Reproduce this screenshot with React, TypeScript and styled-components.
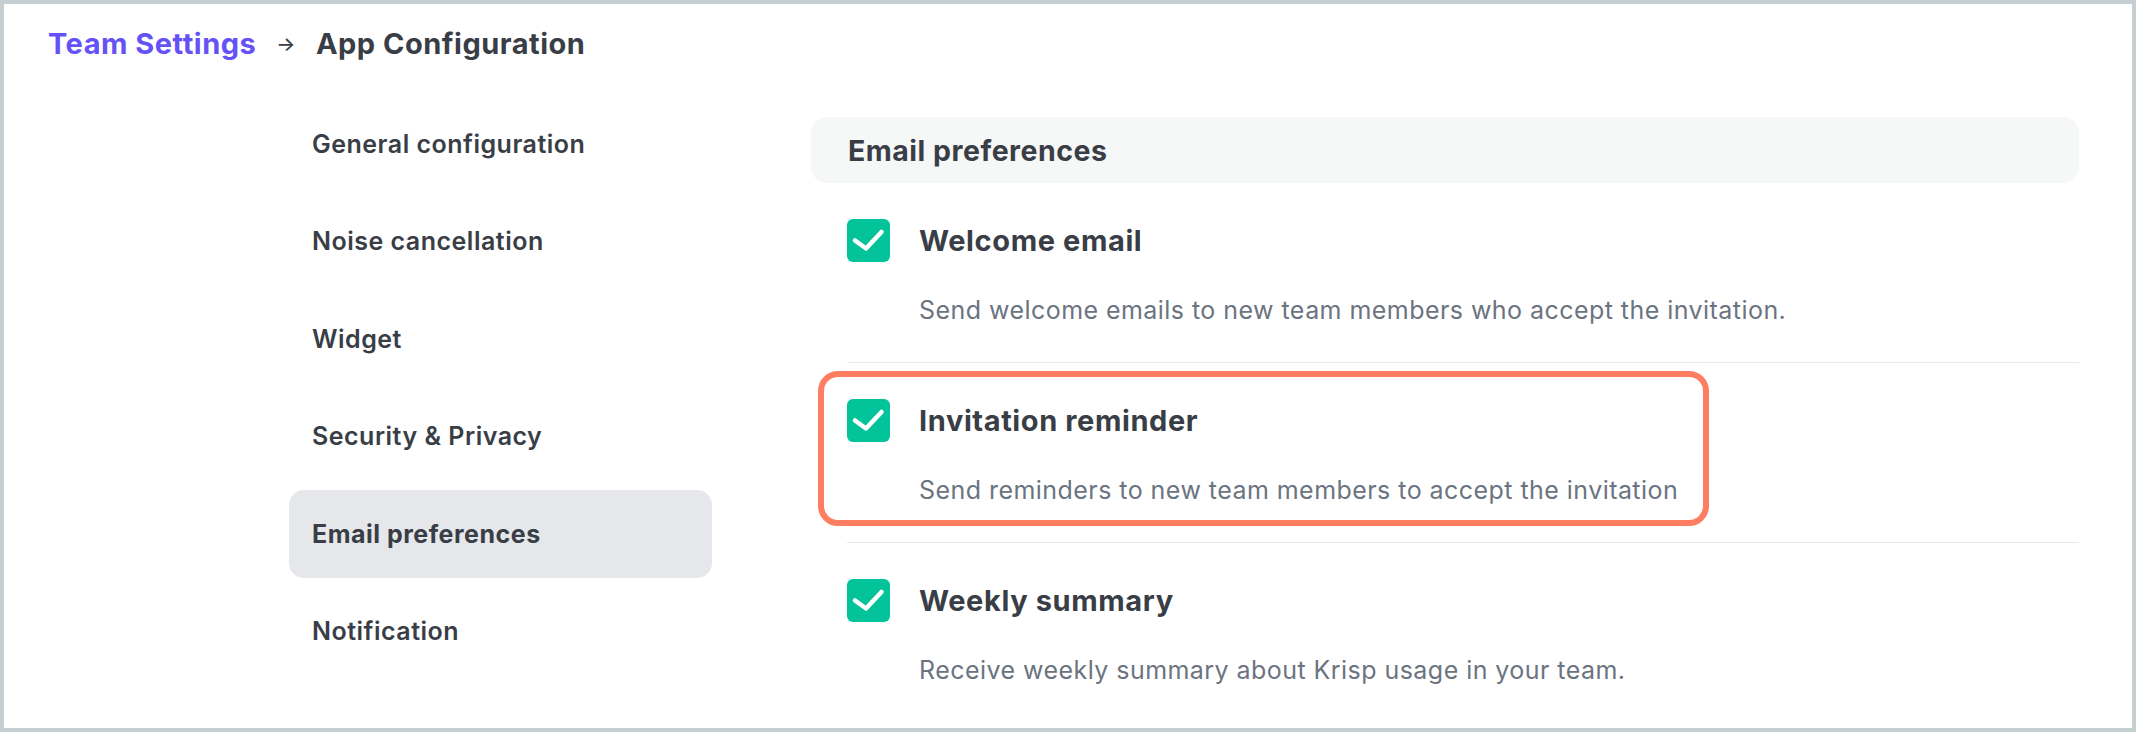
import React from "react";
import styled, { createGlobalStyle } from "styled-components";

const Global = createGlobalStyle`
  html, body { margin: 0; padding: 0; background: #ffffff; }
  body { font-family: Inter, "Noto Sans", sans-serif; -webkit-font-smoothing: antialiased; }
  *, *::before, *::after { box-sizing: border-box; }
`;

const Frame = styled.div`
  width: 2136px;
  height: 732px;
  border: 4px solid #c5ced1;
  background: #ffffff;
  padding: 22px 53px 0 44px;
  overflow: hidden;
`;

const Breadcrumb = styled.div`
  display: flex;
  align-items: center;
  height: 36px;
  font-size: 29px;
  line-height: 36px;
  font-weight: 700;
  letter-spacing: 0.5px;
  color: #393e46;
`;

const Crumb = styled.span<{ $link?: boolean }>`
  color: ${(p) => (p.$link ? "#6552f6" : "#393e46")};
`;

const Arrow = styled.span`
  margin: 0 20px 0 20px;
  font-size: 20px;
  font-weight: 500;
  color: #393e46;
`;

const Body = styled.div`
  display: flex;
  align-items: flex-start;
  margin-left: 241px;
`;

const Sidebar = styled.nav`
  width: 423px;
  flex: 0 0 423px;
  padding-top: 38px;
  display: flex;
  flex-direction: column;
  gap: 9.4px;
`;

const NavItem = styled.div<{ $active?: boolean }>`
  height: 88px;
  display: flex;
  align-items: center;
  padding-left: 23px;
  border-radius: 15px;
  font-size: 25px;
  letter-spacing: 0.5px;
  font-weight: ${(p) => (p.$active ? 700 : 600)};
  color: #393e46;
  background: ${(p) => (p.$active ? "#e5e7ea" : "transparent")};
`;

const Content = styled.section`
  flex: 1;
  margin-left: 99px;
  padding-top: 55px;
`;

const SectionHeader = styled.div`
  height: 66px;
  display: flex;
  align-items: center;
  padding-left: 37px;
  border-radius: 16px;
  background: #f6f7f7;
  font-size: 28.5px;
  letter-spacing: 0.5px;
  font-weight: 700;
  color: #393e46;
`;

const Rows = styled.div`
  padding-left: 36px;
`;

const Row = styled.div<{ $highlight?: boolean }>`
  position: relative;
  padding: 36px 0 34px;
  border-bottom: 1px solid #e6e8ea;
  &:last-child { border-bottom: none; }
  ${(p) =>
    p.$highlight
      ? `&::before {
      content: "";
      position: absolute;
      box-sizing: border-box;
      left: -29px;
      top: 8px;
      width: 891px;
      bottom: 16px;
      border: 6px solid #ff7e61;
      border-radius: 20px;
      pointer-events: none;
    }`
      : ""}
`;

const RowTop = styled.div`
  display: flex;
  align-items: center;
  gap: 29px;
`;

const Check = styled.div`
  width: 43px;
  height: 43px;
  flex: 0 0 43px;
  border-radius: 6px;
  background: #03c39a;
  display: flex;
  align-items: center;
  justify-content: center;
`;

const Title = styled.div`
  font-size: 29px;
  line-height: 36px;
  font-weight: 700;
  letter-spacing: 0.6px;
  color: #393e46;
`;

const Desc = styled.div`
  margin-top: 30px;
  padding-left: 72px;
  font-size: 25px;
  line-height: 36px;
  font-weight: 400;
  letter-spacing: 0.45px;
  color: #6b7480;
`;

const CheckIcon = () => (
  <svg width="43" height="43" viewBox="0 0 43 43" fill="none">
    <polyline
      points="8,21.5 19,29.5 34.5,13"
      stroke="#ffffff"
      strokeWidth="4.5"
      strokeLinecap="round"
      strokeLinejoin="round"
    />
  </svg>
);

const navItems = [
  "General configuration",
  "Noise cancellation",
  "Widget",
  "Security & Privacy",
  "Email preferences",
  "Notification",
];

const prefs = [
  { title: "Welcome email", desc: "Send welcome emails to new team members who accept the invitation." },
  { title: "Invitation reminder", desc: "Send reminders to new team members to accept the invitation", highlight: true },
  { title: "Weekly summary", desc: "Receive weekly summary about Krisp usage in your team." },
];

export default function App() {
  return (
    <>
      <Global />
      <Frame>
        <Breadcrumb>
          <Crumb $link>Team Settings</Crumb>
          <Arrow>→</Arrow>
          <Crumb>App Configuration</Crumb>
        </Breadcrumb>
        <Body>
          <Sidebar>
            {navItems.map((n) => (
              <NavItem key={n} $active={n === "Email preferences"}>
                {n}
              </NavItem>
            ))}
          </Sidebar>
          <Content>
            <SectionHeader>Email preferences</SectionHeader>
            <Rows>
              {prefs.map((p) => (
                <Row key={p.title} $highlight={p.highlight}>
                  <RowTop>
                    <Check>
                      <CheckIcon />
                    </Check>
                    <Title>{p.title}</Title>
                  </RowTop>
                  <Desc>{p.desc}</Desc>
                </Row>
              ))}
            </Rows>
          </Content>
        </Body>
      </Frame>
    </>
  );
}
